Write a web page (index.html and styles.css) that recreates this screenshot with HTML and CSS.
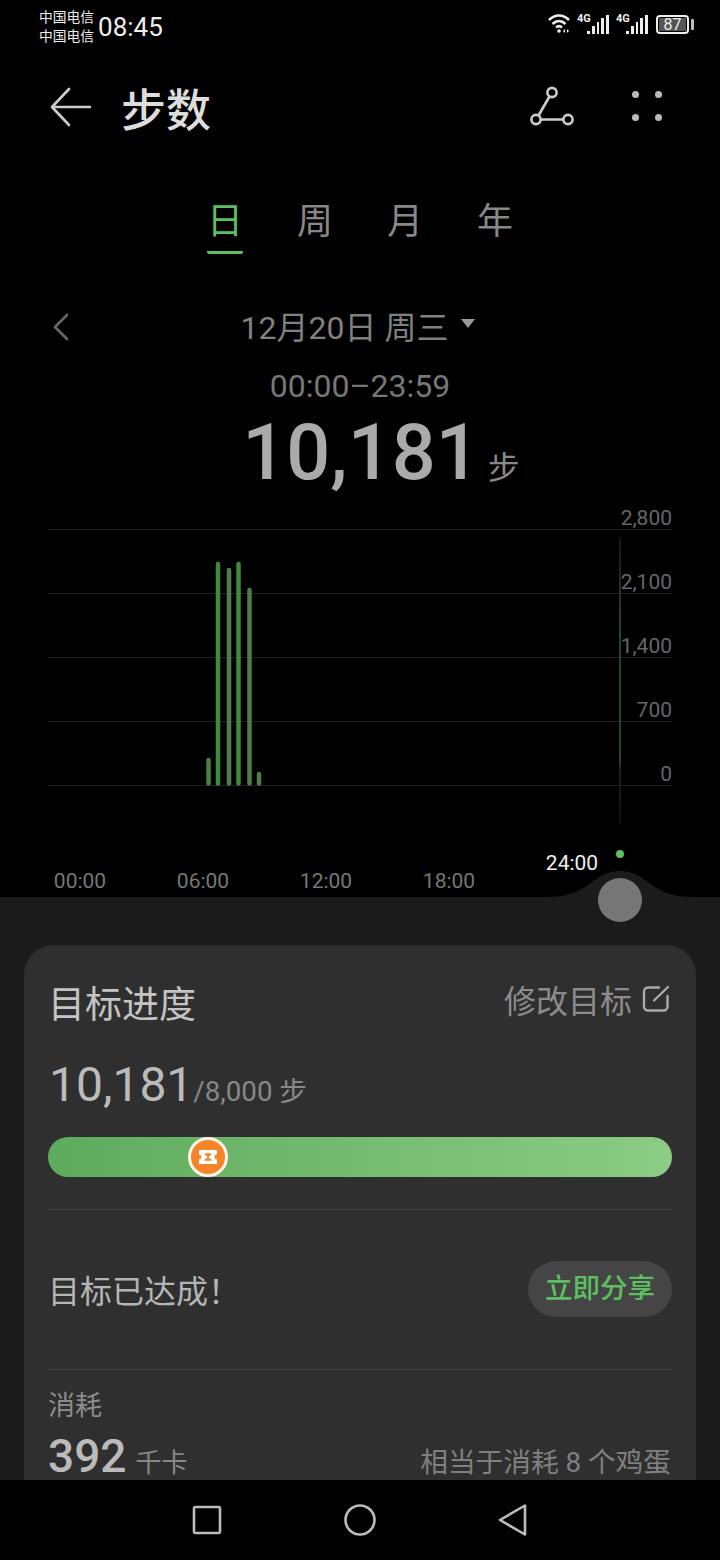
FILE: index.html
```html
<!DOCTYPE html>
<html lang="zh-CN">
<head>
  <meta charset="UTF-8">
  <meta name="viewport" content="width=device-width, initial-scale=1.0">
  <title>步数</title>
  <link rel="stylesheet" href="styles.css">
</head>
<body>
  <div class="phone">
    <div class="statusbar">
      <div class="carriers"><span>中国电信</span><span>中国电信</span></div>
      <span class="clock">08:45</span>
      <div class="status-icons">
        <svg class="wifi" width="24" height="22" viewBox="0 0 24 22" fill="none" stroke="#eee" stroke-width="2.600">
          <path d="M1 7c6-6 14-6 20 0"/>
          <path d="M4.500 11c4-4 9-4 13 0"/>
          <path d="M8 14.500c2-1.800 4-1.800 6 0"/>
          <circle cx="11" cy="18" r="1.800" fill="#eee" stroke="none"/>
          <path d="M17 16l-2 2 2 2zM19 16l2 2-2 2z" fill="#eee" stroke="none"/>
        </svg>
        <div class="signal">
          <span class="net">4G</span>
          <i class="b1"></i><i class="b2"></i><i class="b3"></i><i class="b4"></i><i class="b5"></i>
        </div>
        <div class="signal">
          <span class="net">4G</span>
          <i class="b1"></i><i class="b2"></i><i class="b3"></i><i class="b4"></i><i class="b5"></i>
        </div>
        <div class="battery">
          <div class="battery-body"><span>87</span></div>
          <i class="battery-tip"></i>
        </div>
      </div>
    </div>

    <div class="topbar">
      <svg class="back" width="42" height="40" viewBox="0 0 42 40" fill="none" stroke="#ccc" stroke-width="2.600" stroke-linecap="round" stroke-linejoin="round">
        <path d="M40 20H2M19 2L2 20l17 18"/>
      </svg>
      <h1>步数</h1>
      <svg class="share" width="46" height="42" viewBox="0 0 46 42" fill="none" stroke="#ccc" stroke-width="2.600">
        <circle cx="24" cy="7.500" r="4.600"/>
        <circle cx="8" cy="34.500" r="4.600"/>
        <circle cx="40" cy="34.500" r="4.600"/>
        <path d="M21.500 11.500L10.500 30.500M12.500 34.500h23"/>
      </svg>
      <div class="more"><i></i><i></i><i></i><i></i></div>
    </div>

    <div class="tabs">
      <span class="tab active">日</span>
      <span class="tab">周</span>
      <span class="tab">月</span>
      <span class="tab">年</span>
    </div>

    <div class="daterow">
      <svg class="prev" width="16" height="28" viewBox="0 0 16 28" fill="none" stroke="#666" stroke-width="2.600" stroke-linecap="round" stroke-linejoin="round">
        <path d="M14 2L2 14l12 12"/>
      </svg>
      <span class="date">12月20日 周三</span>
      <i class="caret"></i>
    </div>
    <div class="range">00:00–23:59</div>
    <div class="total"><span class="total-num">10,181</span><span class="total-unit">步</span></div>

    <svg class="chart" width="720" height="397" viewBox="0 500 720 397">
      <defs>
        <linearGradient id="cursorFade" x1="0" y1="0" x2="0" y2="1">
          <stop offset="0" stop-color="#1c1c1c"/>
          <stop offset="0.3" stop-color="#2f5f2f"/>
          <stop offset="0.78" stop-color="#2f5f2f"/>
          <stop offset="0.8" stop-color="#2a2a2a"/>
          <stop offset="1" stop-color="#111"/>
        </linearGradient>
      </defs>
      <g class="grid">
        <path d="M48 529.500H672M48 593.500H672M48 657.500H672M48 721.500H672M48 785.500H672"/>
      </g>
      <text class="ytick" x="672" y="525">2,800</text>
      <text class="ytick" x="672" y="589">2,100</text>
      <text class="ytick" x="672" y="653">1,400</text>
      <text class="ytick" x="672" y="717">700</text>
      <text class="ytick" x="672" y="781">0</text>
      <rect x="619.250" y="537" width="1.500" height="288" fill="url(#cursorFade)"/>
      <g class="bars">
        <path class="bar-dim" d="M208.500 760V783.500"/>
        <path class="bar" d="M218 564V783.500"/>
        <path class="bar-dim" d="M229 570V783.500"/>
        <path class="bar" d="M238.500 564V783.500"/>
        <path class="bar-dim" d="M249.500 590V783.500"/>
        <path class="bar-dim" d="M259 774V783.500"/>
      </g>
      <text class="xtick" x="80" y="888">00:00</text>
      <text class="xtick" x="203" y="888">06:00</text>
      <text class="xtick" x="326" y="888">12:00</text>
      <text class="xtick" x="449" y="888">18:00</text>
      <text class="xnow" x="572" y="870">24:00</text>
      <circle class="now-dot" cx="620" cy="854" r="4"/>
      <path class="bump" d="M548 897C590 897 592 871 620 871C648 871 650 897 692 897Z"/>
    </svg>

    <div class="sheet">
      <div class="handle"></div>
      <div class="card">
        <div class="card-head">
          <h2>目标进度</h2>
          <div class="edit">
            <span>修改目标</span>
            <svg width="28" height="28" viewBox="0 0 28 28" fill="none" stroke="#aaa" stroke-width="2.400" stroke-linecap="round">
              <path d="M17 2.500H6a4 4 0 0 0-4 4v15a4 4 0 0 0 4 4h15.500a4 4 0 0 0 4-4V11"/>
              <path d="M12 15.500L26 2"/>
            </svg>
          </div>
        </div>
        <div class="goal">
          <span class="goal-num">10,181</span><span class="goal-of">/8,000 步</span>
        </div>
        <div class="progress">
          <div class="medal">
            <svg width="18" height="14" viewBox="0 0 18 14">
              <path fill="#fff" d="M0 0h18v4.500a2.500 2.500 0 0 0 0 5V14H0V9.500a2.500 2.500 0 0 0 0-5z"/>
              <path fill="none" stroke="#f5832a" stroke-width="1.600" d="M5.500 4h7M5.500 10h7M7 4l4 6M11 4l-4 6"/>
            </svg>
          </div>
        </div>
        <div class="done-row">
          <span class="done-text">目标已达成！</span>
          <span class="share-btn">立即分享</span>
        </div>
        <div class="burn">
          <div class="burn-label">消耗</div>
          <div class="burn-row">
            <div><span class="burn-num">392</span><span class="burn-unit">千卡</span></div>
            <span class="burn-note">相当于消耗 8 个鸡蛋</span>
          </div>
        </div>
      </div>
    </div>

    <div class="navbar">
      <svg width="30" height="30" viewBox="0 0 30 30" fill="none" stroke="#bbb" stroke-width="2.600" stroke-linejoin="round">
        <rect x="2" y="2" width="26" height="26" rx="1.500"/>
      </svg>
      <svg width="34" height="34" viewBox="0 0 34 34" fill="none" stroke="#bbb" stroke-width="2.600">
        <circle cx="17" cy="17" r="14.500"/>
      </svg>
      <svg width="30" height="34" viewBox="0 0 30 34" fill="none" stroke="#bbb" stroke-width="2.600" stroke-linejoin="round">
        <path d="M28 2.500V31.500L3 17Z"/>
      </svg>
    </div>
  </div>
</body>
</html>
```

FILE: styles.css
```css
*{
  margin: 0;
  padding: 0;
  box-sizing: border-box;
}
html,body{
  background: #000;
}
body{
  font-family: Roboto, "Noto Sans CJK SC", sans-serif;
  color: #ccc;
}
.phone{
  width: 720px;
  height: 1560px;
  display: flex;
  flex-direction: column;
  overflow: hidden;
  background: #000;
}
.statusbar{
  height: 52px;
  flex: none;
  display: flex;
  align-items: center;
  padding: 1px 26px 0 39px;
  color: #eee;
}
.carriers{
  display: flex;
  flex-direction: column;
  font-size: 13.750px;
  line-height: 19px;
}
.clock{
  font-size: 26px;
  margin-left: 4px;
}
.status-icons{
  margin-left: auto;
  margin-top: -5px;
  display: flex;
  align-items: center;
  gap: 7px;
}
.wifi{
  margin-right: -2px;
}
.signal{
  width: 32px;
  height: 19px;
  position: relative;
  display: flex;
  align-items: flex-end;
  justify-content: flex-end;
  gap: 2px;
}
.signal .net{
  position: absolute;
  left: 0;
  top: -3px;
  font-size: 11px;
  line-height: 14px;
  font-weight: 700;
}
.signal i{
  width: 2.800px;
  background: #eee;
}
.b1{ height: 3px; }
.b2{ height: 8px; }
.b3{ height: 12px; }
.b4{ height: 16px; }
.b5{ height: 19px; }
.battery{
  display: flex;
  align-items: center;
  gap: 2px;
  margin-left: 1px;
}
.battery-body{
  width: 33px;
  height: 19px;
  border: 2px solid #eee;
  border-radius: 4px;
  padding: 1px;
  display: flex;
}
.battery-body span{
  flex: 1;
  background: #555;
  color: #eee;
  font-size: 16px;
  line-height: 13px;
  text-align: center;
}
.battery-tip{
  width: 3px;
  height: 11px;
  background: #bbb;
  border-radius: 1px;
}

.topbar{
  height: 110px;
  flex: none;
  display: flex;
  align-items: center;
  padding: 0 58px 0 50px;
}
.topbar h1{
  font-size: 45px;
  font-weight: 500;
  color: #ddd;
  margin-left: 29px;
}
.back{
  display: block;
}
.share{
  margin-left: auto;
  margin-right: 58px;
  margin-top: -3px;
}
.more{
  width: 30px;
  display: grid;
  grid-template-columns: 7px 7px;
  justify-content: space-between;
  row-gap: 16px;
  margin-top: -3px;
}
.more i{
  width: 7px;
  height: 7px;
  border-radius: 50%;
  background: #bbb;
}

.tabs{
  flex: none;
  display: flex;
  justify-content: center;
  gap: 54px;
  margin-top: 34px;
}
.tab{
  width: 36px;
  height: 58px;
  font-size: 36px;
  line-height: 52px;
  text-align: center;
  color: #888;
}
.tab.active{
  color: #5cbf62;
  border-bottom: 3px solid #5cbf62;
  border-radius: 0 0 2px 2px;
}

.daterow{
  flex: none;
  margin-top: 49px;
  height: 44px;
  position: relative;
  display: flex;
  align-items: center;
  justify-content: center;
  gap: 13px;
  padding-right: 4px;
}
.prev{
  position: absolute;
  left: 53px;
  top: 10px;
}
.date{
  font-size: 32px;
  color: #808080;
}
.caret{
  width: 0;
  height: 0;
  border-left: 7px solid transparent;
  border-right: 7px solid transparent;
  border-top: 9px solid #999;
  margin-top: -4px;
}
.range{
  flex: none;
  margin-top: 19px;
  text-align: center;
  font-size: 32px;
  line-height: 40px;
  color: #777;
}
.total{
  flex: none;
  height: 70px;
  margin-top: 12px;
  display: flex;
  justify-content: center;
  align-items: baseline;
  gap: 8px;
  padding-left: 42px;
}
.total-num{
  font-size: 77.500px;
  font-weight: 500;
  line-height: 70px;
  color: #aaa;
}
.total-unit{
  font-size: 32px;
  color: #888;
}

.chart{
  flex: none;
  display: block;
  margin-top: 12px;
  overflow: visible;
}
.grid path{
  stroke: #1f1f1f;
  stroke-width: 1;
  fill: none;
}
.ytick{
  font-size: 21px;
  fill: #666;
  text-anchor: end;
}
.xtick{
  font-size: 21px;
  fill: #777;
  text-anchor: middle;
}
.xnow{
  font-size: 21px;
  fill: #eee;
  text-anchor: middle;
}
.bars path{
  stroke-width: 4.500;
  stroke-linecap: round;
  fill: none;
}
.bar{
  stroke: #3f8a3f;
}
.bar-dim{
  stroke: #4d7d4d;
}
.now-dot{
  fill: #5cbf62;
}
.bump{
  fill: #1b1b1b;
}

.sheet{
  flex: 1;
  min-height: 0;
  background: #1b1b1b;
  padding: 48px 24px 0;
  position: relative;
}
.handle{
  position: absolute;
  left: 598px;
  top: -19px;
  width: 44px;
  height: 44px;
  border-radius: 50%;
  background: #777;
}
.card{
  background: #2f2f2f;
  border-radius: 30px 30px 0 0;
  padding: 29px 24px 0;
  height: 535px;
  overflow: hidden;
}
.card-head{
  display: flex;
  justify-content: space-between;
  align-items: center;
  height: 56px;
}
.card-head h2{
  font-size: 37px;
  font-weight: 400;
  color: #c4c4c4;
}
.edit{
  display: flex;
  align-items: center;
  gap: 10px;
  font-size: 32px;
  color: #8c8c8c;
  margin-top: -6px;
  margin-right: 2px;
}
.goal{
  margin-top: 26px;
  height: 54px;
  padding-left: 1px;
}
.goal-num{
  font-size: 48px;
  color: #bbb;
}
.goal-of{
  font-size: 27.700px;
  color: #888;
}
.progress{
  margin-top: 27px;
  height: 40px;
  border-radius: 20px;
  background: linear-gradient(90deg, #5eab5e, #8ccc84);
  position: relative;
}
.medal{
  position: absolute;
  left: 140px;
  top: 0;
  width: 40px;
  height: 40px;
  border-radius: 50%;
  background: #f5832a;
  border: 3px solid #fdf6e6;
  display: flex;
  align-items: center;
  justify-content: center;
}
.done-row{
  margin-top: 32px;
  height: 161px;
  border-top: 1px solid #434343;
  border-bottom: 1px solid #434343;
  display: flex;
  align-items: center;
  justify-content: space-between;
}
.done-text{
  font-size: 32px;
  color: #b5b5b5;
  margin-top: -2px;
}
.share-btn{
  width: 144px;
  height: 56px;
  border-radius: 28px;
  background: #454545;
  color: #5cbf62;
  font-size: 27.500px;
  font-weight: 500;
  line-height: 56px;
  text-align: center;
  margin-top: -1px;
}
.burn{
  padding-top: 18px;
}
.burn-label{
  font-size: 27px;
  line-height: 36px;
  color: #8c8c8c;
}
.burn-row{
  display: flex;
  justify-content: space-between;
  align-items: baseline;
  margin-top: 12px;
  line-height: 40px;
}
.burn-num{
  font-size: 46px;
  font-weight: 500;
  color: #bbb;
}
.burn-unit{
  font-size: 26px;
  color: #888;
  margin-left: 9px;
}
.burn-note{
  font-size: 27.700px;
  color: #808080;
  margin-right: 1px;
}

.navbar{
  flex: none;
  height: 80px;
  background: #000;
  display: flex;
  align-items: center;
  justify-content: space-between;
  padding: 0 193px 0 192px;
}
```
